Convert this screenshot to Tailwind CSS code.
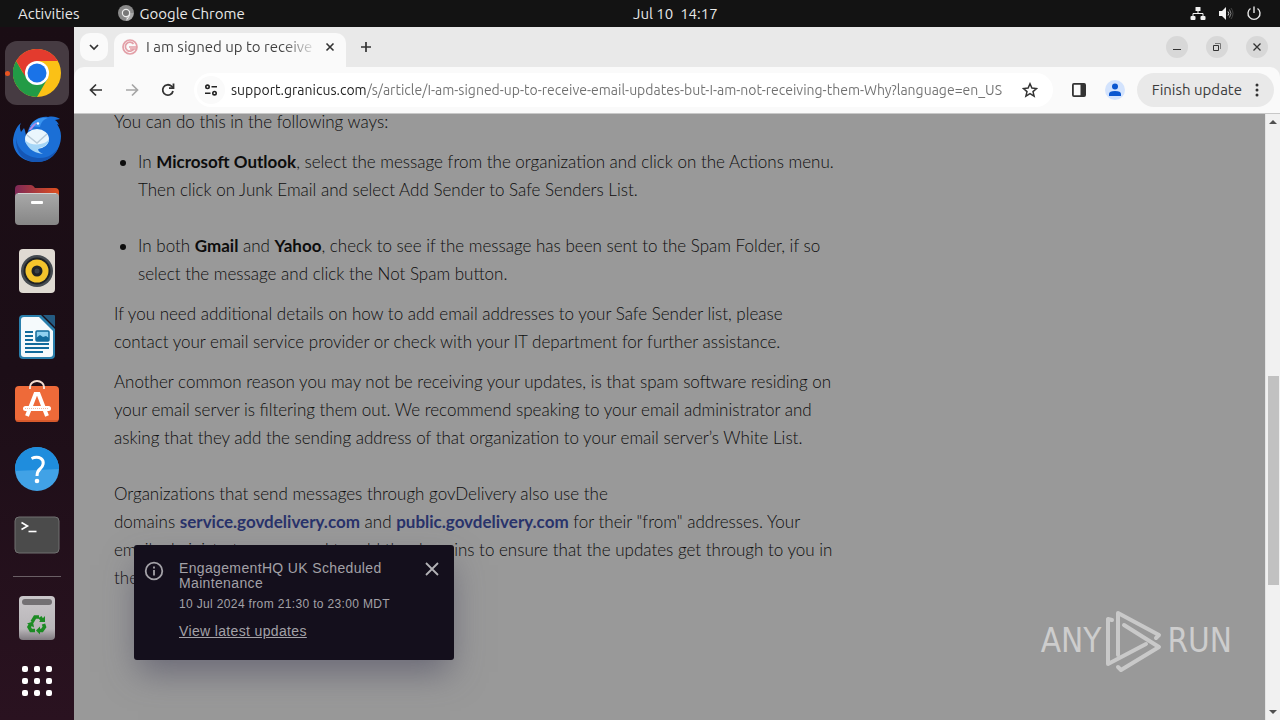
<!DOCTYPE html>
<html lang="en">
<head>
  <meta charset="UTF-8">
  <title>I am signed up to receive email updates</title>
  <meta name="viewport" content="width=device-width, initial-scale=1">
  <script src="https://cdn.jsdelivr.net/npm/@tailwindcss/browser@4"></script>
</head>
<body class="h-screen flex flex-col overflow-hidden bg-[#1c0d16] font-['Ubuntu','Noto_Sans',sans-serif] text-sm">

  <!-- Top bar -->
  <header class="h-[27px] shrink-0 grid grid-cols-[1.13fr_auto_1fr] items-center bg-[#131313] text-[#e8e8e8] text-[15px] px-[18px]">
    <div class="flex items-center">
      <button class="mr-[38px]">Activities</button>
      <button class="flex items-center gap-1.5">
        <svg class="w-4 h-4" viewBox="0 0 16 16"><circle cx="8" cy="8" r="8" fill="#8a8a8a"/><path d="M8 8h7.500a8 8 0 0 1-7.500 8z" fill="#a8a8a8"/><circle cx="8" cy="8" r="3.600" fill="#777" stroke="#eee" stroke-width="1.200"/><path d="M11.600 6v4L9 14.500" fill="none" stroke="#eee"/></svg>
        Google Chrome
      </button>
    </div>
    <button class="whitespace-pre">Jul 10  14:17</button>
    <div class="flex justify-end items-center gap-3">
      <svg class="w-4 h-4" viewBox="0 0 16 16" fill="#f2f2f2"><rect x="5.500" y="1" width="5" height="4" rx=".5"/><rect x="0.500" y="10" width="5" height="4" rx="1"/><rect x="10.500" y="10" width="5" height="4" rx="1"/><path d="M3 10V7.500h10V10M8 5v2.500" fill="none" stroke="#f2f2f2"/></svg>
      <svg class="w-4 h-4" viewBox="0 0 16 16"><path d="M1 5h3l4-4v13l-4-4H1z" fill="#f2f2f2"/><path d="M10 5.500q1.500 2 0 4" fill="none" stroke="#ccc"/><path d="M11.500 3.500q3 4 0 8" fill="none" stroke="#888"/><path d="M13 2q4 5.500 0 11" fill="none" stroke="#444"/></svg>
      <svg class="w-4 h-4" viewBox="0 0 16 16" fill="none" stroke="#e8e8e8" stroke-width="1.4"><path d="M4.500 2.500a6 6 0 1 0 7 0M8 .5v6.500"/></svg>
    </div>
  </header>

  <div class="flex flex-1 min-h-0">

    <!-- Dock -->
    <nav class="w-[74px] shrink-0 flex flex-col items-center pt-3.5 bg-linear-to-b from-[#1a0d14] via-[#1c0e17] to-[#2a1220]">
      <button aria-label="Google Chrome" class="relative w-16 h-16 mb-0.5 rounded-xl bg-[#463b42] flex items-center justify-center">
        <span class="absolute left-0 w-[5px] h-[5px] rounded-full bg-[#e95420]"></span>
        <svg class="w-12 h-12" viewBox="0 0 48 48"><circle cx="24" cy="24" r="24" fill="#fbc116"/><path d="M3.200 12A24 24 0 0 0 24 48L34.400 30 24 24H10.100z" fill="#229b46"/><path d="M3.200 12A24 24 0 0 1 44.800 12H24L12 27z" fill="#e33b2e"/><circle cx="24" cy="24" r="12" fill="#fff"/><circle cx="24" cy="24" r="9.500" fill="#1a73e8"/></svg>
      </button>
      <button aria-label="Thunderbird" class="w-16 h-16 mb-0.5 flex items-center justify-center">
        <svg class="w-12 h-12" viewBox="0 -1 48 48"><path d="M8 7c-2 3-1 6 0 9l3-4c1 2 2 6 2 9l3-9c4-9 12-12 19-11 5-1 9 0 12 2l-5 1c2 1 3 3 4 5l-2-1c2 3 4 7 4 12 0 14-10 26-24 26C10 46 0 38 0 24 1 17 3 11 8 7z" fill="#1b6fd6"/><path d="M3 20c0 12 10 22 24 22 8 0 14-4 18-10-3 8-10 14-21 14C11 46 2 38 3 20z" fill="#1556b4"/><path d="M17 10c4-7 12-9 18-8-4 1-7 4-8 9z" fill="#3a94ef"/><ellipse cx="24" cy="23" rx="12" ry="10" fill="#eaf6fd"/><path d="M12 24c1 6 7 13 18 14-4-2-6-4-4-6 7-1 10-5 10-9-3 6-18 8-24 1z" fill="#a5d6f7"/><path d="M14 19l10 8 10-9" fill="none" stroke="#b9cbd8" stroke-width="1.500"/><path d="M16 14c2-4 6-8 10-8-4 2-5 5-8 8z" fill="#b48be5"/><circle cx="25" cy="7.500" r="1.200" fill="#fff"/></svg>
      </button>
      <button aria-label="Files" class="w-16 h-16 mb-0.5 flex items-center justify-center">
        <svg class="w-12 h-12" viewBox="0 0 48 48"><defs><linearGradient id="fl"><stop stop-color="#7d2857"/><stop offset="1" stop-color="#e0501f"/></linearGradient><linearGradient id="fg" x2="0" y2="1"><stop stop-color="#a9a9a9"/><stop offset="1" stop-color="#868686"/></linearGradient></defs><path d="M2 8a4 4 0 0 1 4-4h12q2 0 4 3h20a4 4 0 0 1 4 4v14H2z" fill="url(#fl)"/><rect x="2" y="12" width="44" height="32" rx="4" fill="url(#fg)"/><path d="M5 12.500h38" stroke="#d2d2d2"/><rect x="18" y="20" width="12" height="3" rx="1" fill="#fff"/></svg>
      </button>
      <button aria-label="Rhythmbox" class="w-16 h-16 mb-0.5 flex items-center justify-center">
        <svg class="w-12 h-12" viewBox="0 0 48 48"><rect x="6" y="2" width="36" height="44" rx="4" fill="#dfdad2"/><circle cx="24" cy="24" r="16" fill="#454b50"/><circle cx="24" cy="24" r="13.500" fill="#1f2225"/><circle cx="24" cy="24" r="11.500" fill="#f4c42c"/><circle cx="24" cy="24" r="5.500" fill="#202326"/><circle cx="24" cy="24" r="2.500" fill="#3b4147"/></svg>
      </button>
      <button aria-label="LibreOffice Writer" class="w-16 h-16 mb-0.5 flex items-center justify-center">
        <svg class="w-12 h-12" viewBox="0 0 48 48"><path d="M10 2h18l14 14v26a4 4 0 0 1-4 4H10a4 4 0 0 1-4-4V6a4 4 0 0 1 4-4z" fill="#2a7fac"/><path d="M11 4h15l14 14v23a3 3 0 0 1-3 3H11a3 3 0 0 1-3-3V7a3 3 0 0 1 3-3z" fill="#f5fafc"/><path d="M30 2h11q1 0 1 1v11z" fill="#245b82"/><path d="M12 19h8M12 23h8M12 27h8M12 31h24M12 35h24M12 39h18" stroke="#116b9c" stroke-width="2"/><rect x="23" y="18" width="13" height="10" rx="1" fill="#8fd0ef" stroke="#116b9c" stroke-width="1.500"/><path d="M23 28v-3l4-3 3 2 3-1 3 2v3z" fill="#116b9c"/></svg>
      </button>
      <button aria-label="Ubuntu Software" class="w-16 h-16 mb-0.5 flex items-center justify-center">
        <svg class="w-12 h-12" viewBox="0 0 48 48"><rect x="2" y="7" width="44" height="36" rx="4" fill="#ee6a39"/><path d="M3 42h42" stroke="#c24c20"/><path d="M17 10V8a7 6 0 0 1 14 0v2" fill="none" stroke="#f3ddd0" stroke-width="2"/><path d="M14 37l8.500-22h3L34 37" fill="none" stroke="#fff" stroke-width="4"/><rect x="10" y="27" width="28" height="5" rx="2.500" fill="#fff"/><path d="M12 29.500h24" stroke="#ee9d7d" stroke-dasharray="1 1" stroke-width=".7"/></svg>
      </button>
      <button aria-label="Help" class="w-16 h-16 mb-0.5 flex items-center justify-center">
        <svg class="w-12 h-12" viewBox="0 0 48 48"><circle cx="24" cy="24" r="22" fill="#41a2e6"/><path d="M2 24a22 22 0 0 1 44 0L2 26z" fill="#1f8ddd"/><path d="M18.500 13.500Q24 11 28 13.500c4 3 2 8-1 10.500q-3 2.500-3 7" fill="none" stroke="#fff" stroke-width="3"/><circle cx="24" cy="36" r="2.300" fill="#fff"/></svg>
      </button>
      <button aria-label="Terminal" class="w-16 h-16 flex items-center justify-center">
        <svg class="w-12 h-12" viewBox="0 0 48 48"><rect x="2" y="6" width="44" height="36" rx="4" fill="#4b4b4b" stroke="#707070"/><path d="M8.500 11.500l6 3.500-6 3.500" fill="none" stroke="#fff" stroke-width="1.600"/><path d="M15.500 20.500h8" stroke="#fff" stroke-width="1.600"/></svg>
      </button>
      <hr class="w-12 my-[9px] border-[#6a5f65]">
      <button aria-label="Trash" class="w-16 h-16 flex items-center justify-center">
        <svg class="w-12 h-12" viewBox="0 0 48 48"><defs><linearGradient id="tr" x2="0" y2="1"><stop stop-color="#c9c6c9"/><stop offset=".75" stop-color="#b9b6b9"/><stop offset="1" stop-color="#807a80"/></linearGradient></defs><rect x="6" y="2" width="36" height="44" rx="4" fill="url(#tr)"/><rect x="9" y="5" width="30" height="6" rx="3" fill="#737073"/><g fill="none" stroke="#1c8b23" stroke-width="3.500"><path d="M19 28l3-5h4"/><path d="M27 23l2.500 4"/><path d="M30.500 30l1 3-2.500 3.500h-3"/><path d="M22 36.500h-4L16 33l1.500-2.500"/></g><path d="M26 28h6v-6zM27 32.500v8l-4-4zM14 29.500l6-2 1 6z" fill="#1c8b23"/></svg>
      </button>
      <button aria-label="Show applications" class="w-16 h-16 flex items-center justify-center">
        <svg class="w-8 h-8" viewBox="0 1 32 32" fill="#fff"><rect x="1" y="1" width="6" height="6" rx="2"/><rect x="13" y="1" width="6" height="6" rx="2"/><rect x="25" y="1" width="6" height="6" rx="2"/><rect x="1" y="13" width="6" height="6" rx="2"/><rect x="13" y="13" width="6" height="6" rx="2"/><rect x="25" y="13" width="6" height="6" rx="2"/><rect x="1" y="25" width="6" height="6" rx="2"/><rect x="13" y="25" width="6" height="6" rx="2"/><rect x="25" y="25" width="6" height="6" rx="2"/></svg>
      </button>
    </nav>

    <!-- Browser window -->
    <div class="flex-1 min-w-0 flex flex-col bg-[#e9e9e9]">

      <!-- Tab strip -->
      <div class="h-10 shrink-0 flex items-center pl-1.5 pr-3">
        <button aria-label="Search tabs" class="w-7 h-7 mr-1.5 rounded-[10px] bg-[#fafafa] flex items-center justify-center">
          <svg class="w-3 h-3" viewBox="0 0 12 12" fill="none" stroke="#333" stroke-width="1.700"><path d="M2 4l4 4 4-4"/></svg>
        </button>
        <div class="self-end w-[232px] h-[34px] px-2 pb-1.5 rounded-t-[10px] bg-[#fafafa] flex items-center">
          <svg class="w-4 h-4 mr-2 shrink-0" viewBox="0 0 16 16" fill="none" stroke="#e3a0a8"><circle cx="8" cy="8" r="7" stroke-width="1.700"/><path d="M11.500 5A4.500 4.500 0 1 0 12 9.500M7 8h8M8 10h6" stroke-width="1.700"/></svg>
          <span class="w-[167px] whitespace-nowrap text-[15px] bg-[linear-gradient(to_right,#404040_136px,transparent_172px)] bg-clip-text text-transparent">I am signed up to receive</span>
          <button aria-label="Close tab" class="ml-auto w-4 h-4 flex items-center justify-center">
            <svg class="w-4 h-4" viewBox="0 0 16 16" stroke="#333" stroke-width="1.600"><path d="M4.500 4.500l7 7M11.500 4.500l-7 7"/></svg>
          </button>
        </div>
        <button aria-label="New tab" class="ml-3">
          <svg class="w-4 h-4" viewBox="0 0 16 16" stroke="#333" stroke-width="1.700"><path d="M8 3v10M3 8h10"/></svg>
        </button>
        <div class="ml-auto flex gap-[18px]">
          <button aria-label="Minimize" class="w-[22px] h-[22px] rounded-full bg-[#d8d8d8]"><svg viewBox="0 0 22 22" stroke="#333"><path d="M7 13.500h8"/></svg></button>
          <button aria-label="Restore" class="w-[22px] h-[22px] rounded-full bg-[#d8d8d8]"><svg viewBox="0 0 22 22" fill="none" stroke="#333"><path d="M7.500 9.500h5v5h-5z"/><path d="M9 7.500h5.500V13" stroke="#777"/></svg></button>
          <button aria-label="Close" class="w-[22px] h-[22px] rounded-full bg-[#d8d8d8]"><svg viewBox="0 0 22 22" stroke="#333" stroke-width="1.300"><path d="M7.500 7.500l7 7M14.500 7.500l-7 7"/></svg></button>
        </div>
      </div>

      <!-- Toolbar -->
      <div class="h-[47px] shrink-0 flex items-center pl-3.5 pr-1.5 bg-[#fafafa] border-b border-[#c8c8c8] rounded-t-[10px]">
        <button aria-label="Back" class="mr-5"><svg class="w-4 h-4" viewBox="0 0 16 16" fill="none" stroke="#333" stroke-width="1.700"><path d="M14 8H3M8 2.500L2.500 8 8 13.500"/></svg></button>
        <button aria-label="Forward" class="mr-5"><svg class="w-4 h-4" viewBox="0 0 16 16" fill="none" stroke="#a6a6a6" stroke-width="1.700"><path d="M2 8h11M8 2.500L13.500 8 8 13.500"/></svg></button>
        <button aria-label="Reload" class="mr-[18px]"><svg class="w-4 h-4" viewBox="0 0 16 16" fill="none" stroke="#333" stroke-width="1.800"><path d="M13 9A5.200 5.200 0 1 1 11.500 4.200L13.500 6"/><path d="M13.500 1.500V6.200H9"/></svg></button>
        <div class="flex-1 min-w-0 h-[34px] pl-[3px] pr-[15px] rounded-full bg-white flex items-center">
          <button aria-label="Site information" class="w-7 h-7 mr-1.5 rounded-full bg-[#fafafa] flex items-center justify-center shrink-0">
            <svg class="w-4 h-4" viewBox="0 0 16 16" fill="none" stroke="#222" stroke-width="1.600"><circle cx="4.500" cy="4.800" r="1.700"/><path d="M8.500 4.800H14M2 11.200h5.500"/><circle cx="11.500" cy="11.200" r="1.700"/></svg>
          </button>
          <input type="text" aria-label="Address bar" class="flex-1 min-w-0 outline-none bg-[linear-gradient(to_right,#1f1f1f_135px,#707070_135px)] bg-clip-text text-transparent" value="support.granicus.com/s/article/I-am-signed-up-to-receive-email-updates-but-I-am-not-receiving-them-Why?language=en_US">
          <button aria-label="Bookmark this page" class="ml-2.5 shrink-0"><svg class="w-4 h-4" viewBox="0 0 16 16" fill="none" stroke="#333" stroke-width="1.500"><path d="M8 1.800l1.900 4.300 4.600.4-3.500 3.100 1.100 4.600L8 11.700l-4.100 2.500L5 9.600 1.500 6.500l4.600-.4z"/></svg></button>
        </div>
        <button aria-label="Side panel" class="ml-[18px]"><svg class="w-4 h-4" viewBox="0 0 16 16"><rect x="1.900" y="1.900" width="12.200" height="12.200" rx="1" fill="none" stroke="#333" stroke-width="1.800"/><path d="M9.500 2H14v12H9.500z" fill="#333"/></svg></button>
        <button aria-label="Profile" class="ml-[18px] mr-3"><svg class="w-5 h-5" viewBox="0 0 20 20"><circle cx="10" cy="10" r="10" fill="#d3e3fd"/><circle cx="10" cy="6.500" r="3" fill="#0b57d0"/><path d="M4 16v-2q0-3 6-3t6 3v2z" fill="#0b57d0"/></svg></button>
        <button class="h-[34px] px-[15px] rounded-full bg-[#e9e9e9] text-[#3c3c3c] text-[15px] flex items-center gap-[13px] whitespace-nowrap">
          Finish update
          <svg class="w-1 h-4" viewBox="0 0 4 16" fill="#333"><circle cx="2" cy="3" r="1.500"/><circle cx="2" cy="8" r="1.500"/><circle cx="2" cy="13" r="1.500"/></svg>
        </button>
      </div>

      <!-- Page -->
      <div class="relative flex-1 min-h-0 flex bg-[#999]">
        <main class="flex-1 min-w-0 overflow-hidden">
          <article class="-mt-1.5 pl-10 font-['Sofia_Pro','Lato',sans-serif] font-light text-[17px] leading-7 text-[#0d0d0d] whitespace-nowrap [&_b]:font-bold">
            <p>You can do this in the following ways:</p>
            <ul class="list-disc pl-6 my-3">
              <li class="mb-7">In <b>Microsoft Outlook</b>, select the message from the organization and click on the Actions menu.<br>Then click on Junk Email and select Add Sender to Safe Senders List.</li>
              <li>In both <b>Gmail</b> and <b>Yahoo</b>, check to see if the message has been sent to the Spam Folder, if so<br>select the message and click the Not Spam button.</li>
            </ul>
            <p class="mb-3">If you need additional details on how to add email addresses to your Safe Sender list, please<br>contact your email service provider or check with your IT department for further assistance.</p>
            <p class="mb-7">Another common reason you may not be receiving your updates, is that spam software residing on<br>your email server is filtering them out. We recommend speaking to your email administrator and<br>asking that they add the sending address of that organization to your email server’s White List.</p>
            <p>Organizations that send messages through govDelivery also use the<br>domains <a href="#" class="font-bold text-[#29336b]">service.govdelivery.com</a> and <a href="#" class="font-bold text-[#29336b]">public.govdelivery.com</a> for their "from" addresses. Your<br>email administrator may need to add the domains to ensure that the updates get through to you in<br>the future.</p>
          </article>
        </main>

        <!-- Scrollbar -->
        <div class="w-[15px] shrink-0 flex flex-col items-center bg-[#f1f1f1] border-l border-[#e4e4e4]">
          <svg class="h-4 w-3.5 shrink-0" viewBox="0 0 14 16" fill="#505050"><path d="M3 10l4-4 4 4z"/></svg>
          <div class="grow-[246]"></div>
          <div class="grow-[209] w-[11px] bg-[#c1c1c1]"></div>
          <div class="grow-[119]"></div>
          <svg class="h-4 w-3.5 shrink-0" viewBox="0 0 14 16" fill="#505050"><path d="M3 6l4 4 4-4z"/></svg>
        </div>

        <!-- Status notice -->
        <div role="status" class="absolute left-[60px] bottom-[60px] w-80 pt-4 pb-5 pl-2.5 pr-3.5 flex items-start rounded-[3px] bg-[#140f1c] text-[#a3a1a7] font-['Liberation_Sans',Arial,sans-serif] tracking-wide shadow-[0_16px_32px_-4px_#4b4a5f99]">
          <svg class="w-5 h-5 mr-[15px] shrink-0" viewBox="0 0 20 20" fill="none" stroke="#a3a1a7" stroke-width="1.800"><circle cx="10" cy="10" r="8.300"/><path d="M10 9v5.500M10 5.500v2"/></svg>
          <div class="flex-1">
            <h2 class="text-sm leading-[15px]">EngagementHQ UK Scheduled Maintenance</h2>
            <p class="mt-[5px] text-xs leading-4">10 Jul 2024 from 21:30 to 23:00 MDT</p>
            <a href="#" class="block mt-2.5 text-sm leading-[18px] underline">View latest updates</a>
          </div>
          <button aria-label="Close notice"><svg class="w-4 h-4" viewBox="0 0 16 16" stroke="#b3b2b6" stroke-width="1.800"><path d="M2 2l12 12M14 2L2 14"/></svg></button>
        </div>

        <!-- Watermark -->
        <div class="absolute right-12 bottom-[46px] flex items-center gap-1 text-[#cdcdcd] font-['Liberation_Sans_Narrow','DejaVu_Sans_Condensed',sans-serif] text-[33px] leading-[66px]">
          <span>ANY</span>
          <svg class="w-[58px] h-[66px]" viewBox="0 0 58 66" fill="none" stroke="#c9c9c9" stroke-width="4" stroke-linejoin="round" stroke-linecap="round"><path d="M7 12L3 11v45l38-20"/><path d="M13 47V5l41 22-3 3"/><path d="M19 17l35 22-38 23-3-3"/></svg>
          <span>RUN</span>
        </div>
      </div>
    </div>
  </div>
</body>
</html>
